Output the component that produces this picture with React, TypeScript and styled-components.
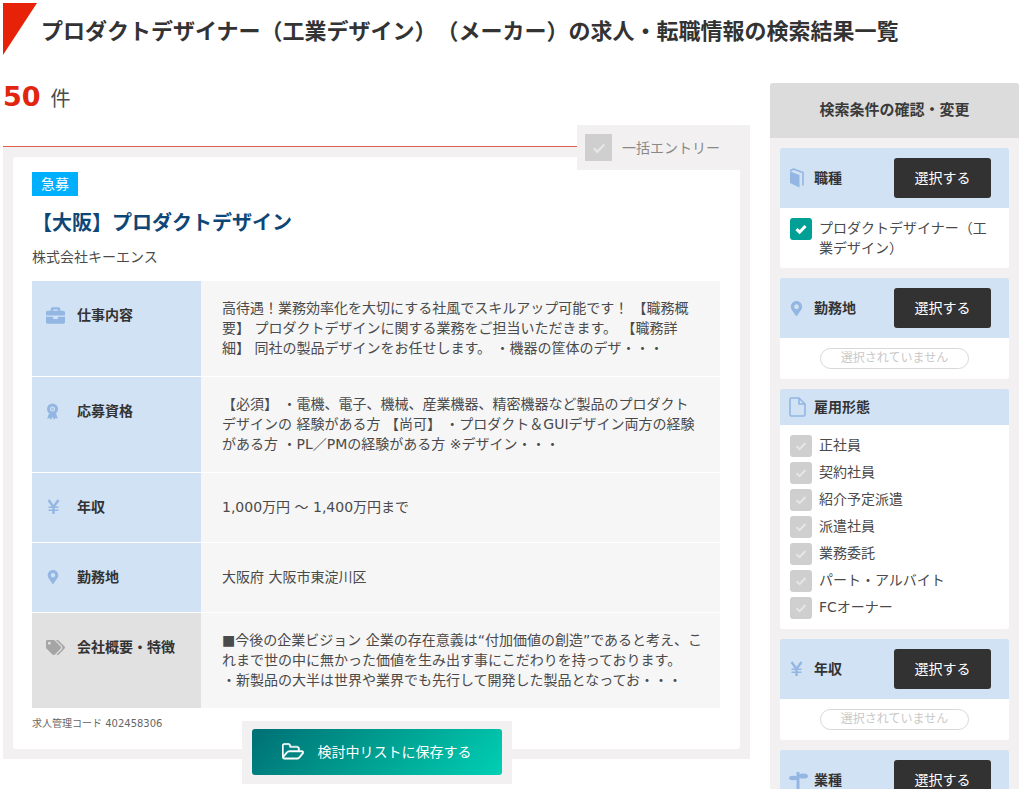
import React from "react";
import styled, { createGlobalStyle } from "styled-components";
import { FaBriefcase, FaMapMarkerAlt, FaTags } from "react-icons/fa";

const GlobalStyle = createGlobalStyle`
  *, *::before, *::after { box-sizing: border-box; }
  html { scrollbar-width: none; }
  body {
    margin: 0;
    background: #fff;
    color: #4a4a4a;
    font-family: "DejaVu Sans", "Noto Sans CJK JP", sans-serif;
    font-size: 14px;
    line-height: 20px;
    text-spacing-trim: space-all;
  }
  button, input { font: inherit; }
  h1, h2, h3, p, ul { margin: 0; padding: 0; }
`;

const Page = styled.div`
  padding: 3px 5px 10px 3px;
`;

const PageHeader = styled.header`
  display: flex;
  align-items: flex-start;
  gap: 4px;
  height: 80px;
`;

const Corner = styled.div`
  flex: none;
  width: 34px;
  height: 52px;
  background: #e62208;
  clip-path: polygon(0 0, 100% 0, 0 100%);
`;

const PageTitle = styled.h1`
  padding-top: 13px;
  color: #333;
  font-size: 22px;
  line-height: 32px;
`;

const Columns = styled.div`
  display: grid;
  grid-template-columns: minmax(0, 1fr) 249px;
  gap: 20px;
  align-items: start;
`;

const Count = styled.p`
  display: flex;
  align-items: baseline;
  gap: 10px;
  height: 63px;
  font-size: 20px;
  line-height: 28px;
`;

const CountNumber = styled.strong`
  color: #e2250f;
  font-size: 27px;
`;

const JobFrame = styled.article`
  position: relative;
  padding: 10px;
  border-top: 1px solid #e0604f;
  background: #f2f0f0;
`;

const JobCard = styled.div`
  padding: 15px 20px 15px 19px;
  border-radius: 3px;
  background: #fff;
`;

const BulkEntry = styled.label`
  position: absolute;
  top: -22px;
  right: 0;
  display: flex;
  align-items: center;
  gap: 10px;
  width: 173px;
  height: 45px;
  padding: 0 8px;
  background: #f2f0f0;
  color: #888;
`;

const Badge = styled.span`
  display: inline-block;
  padding: 2px 9px;
  background: #00b0ff;
  color: #fff;
`;

const JobTitle = styled.h2`
  margin-top: 11px;
  color: #0e4676;
  font-size: 20px;
  line-height: 32px;
`;

const Company = styled.p`
  margin: 8px 0 14px;
`;

const Details = styled.table`
  width: 100%;
  border-spacing: 0;
`;

const DetailLabel = styled.th<{ $muted?: boolean }>`
  width: 169px;
  padding: 24px 0 0 14px;
  border-bottom: 1px solid #fff;
  background: ${(p) => (p.$muted ? "#e1e1e1" : "#d1e2f4")};
  color: #333;
  text-align: left;
  vertical-align: top;
`;

const LabelContent = styled.div<{ $muted?: boolean }>`
  display: grid;
  grid-template-columns: 20px 1fr;
  gap: 11px;
  align-items: center;

  svg { color: ${(p) => (p.$muted ? "#a5a5a5" : "#93b6e2")}; }
`;

const DetailText = styled.td<{ $tall?: boolean }>`
  height: ${(p) => (p.$tall ? 96 : 70)}px;
  padding: 16px 16px 18px 21px;
  border-bottom: 1px solid #fff;
  background: #f6f6f6;
  white-space: pre-line;
`;

const JobCode = styled.p`
  margin-top: 5px;
  color: #666;
  font-size: 10px;
`;

const SaveArea = styled.div`
  position: absolute;
  bottom: -25px;
  left: 50%;
  width: 270px;
  padding: 8px 10px 9px;
  background: #f2f0f0;
  transform: translateX(-50%);
`;

const SaveButton = styled.button`
  display: flex;
  align-items: center;
  justify-content: center;
  gap: 14px;
  width: 100%;
  height: 46px;
  padding: 0;
  border: 0;
  border-radius: 3px;
  background: linear-gradient(135deg, #006f75, #009b8e 45%, #00cfb4);
  color: #fff;
`;

const Sidebar = styled.aside`
  border-radius: 3px;
  overflow: hidden;
  background: #f2f0f0;
`;

const SidebarTitle = styled.h2`
  padding: 17px 0 18px;
  background: #dcdcdc;
  color: #3a3a3a;
  font-size: 15px;
  line-height: 20px;
  text-align: center;
`;

const Groups = styled.div`
  display: grid;
  gap: 10px;
  padding: 10px;
`;

const Group = styled.section`
  background: #fff;
  border-radius: 2px;
  overflow: hidden;
`;

const GroupHeader = styled.div<{ $compact?: boolean }>`
  display: grid;
  grid-template-columns: 20px 1fr auto;
  column-gap: 5px;
  align-items: center;
  height: ${(p) => (p.$compact ? 36 : 60)}px;
  padding: 0 18px 0 9px;
  background: #d1e2f4;

  svg { color: #93b6e2; }
`;

const GroupTitle = styled.h3`
  color: #333;
  font-size: 14px;
`;

const SelectButton = styled.button`
  width: 97px;
  height: 40px;
  padding: 0;
  border: 0;
  border-radius: 3px;
  background: #323232;
  color: #fff;
`;

const Options = styled.ul`
  display: grid;
  gap: 5px;
  padding: 10px;
  list-style: none;
`;

const Option = styled.label`
  display: grid;
  grid-template-columns: 22px 1fr;
  gap: 7px;
  align-items: start;
`;

const Empty = styled.div`
  padding: 10px 40px;
`;

const EmptyPill = styled.p`
  border: 1px solid #d8d8d8;
  border-radius: 11px;
  color: #c8c8c8;
  font-size: 12px;
  line-height: 19px;
  text-align: center;
`;

const CheckBox = styled.span<{ $size: number }>`
  display: grid;
  flex: none;
  place-items: center;
  width: ${(p) => p.$size}px;
  height: ${(p) => p.$size}px;

  > * { grid-area: 1 / 1; }
  svg { position: relative; pointer-events: none; color: #e6e6e6; }
  input:checked + svg { color: #fff; }
`;

const CheckInput = styled.input<{ $square?: boolean }>`
  width: 100%;
  height: 100%;
  margin: 0;
  appearance: none;
  border-radius: ${(p) => (p.$square ? 0 : 3)}px;
  background: #cfcfcf;

  &:checked { background: #00a096; }
`;

function Check({ size = 22, square, checked }: { size?: number; square?: boolean; checked?: boolean }) {
  const glyph = size > 22 ? 14 : 12;
  return (
    <CheckBox $size={size}>
      <CheckInput type="checkbox" defaultChecked={checked} $square={square} />
      <svg width={glyph} height={glyph} viewBox="0 0 12 12" fill="none" stroke="currentColor" strokeWidth={checked ? 3 : 2}>
        <path d="M1.5 6.2 4.6 9.2 10.5 3" />
      </svg>
    </CheckBox>
  );
}

const BookIcon = () => (
  <svg width="17" height="20" viewBox="0 0 17 20" fill="currentColor">
    <path d="M1 3.500 10.500 7v12.500L1 15z" />
    <path d="M1 3 4.500 1l9.500 3.500V17.500" fill="none" stroke="currentColor" strokeWidth="1.600" strokeLinejoin="round" />
  </svg>
);

const SignIcon = () => (
  <svg width="19" height="20" viewBox="0 0 19 20" fill="currentColor">
    <path d="M7.500 2h3v18h-3z" />
    <ellipse cx="14" cy="6" rx="5" ry="2.600" />
    <ellipse cx="4.500" cy="8" rx="4.500" ry="2.200" />
  </svg>
);

const YenIcon = () => (
  <svg width="15" height="16" viewBox="0 0 15 16" fill="none" stroke="currentColor">
    <path d="M2.500 1 7.500 8 12.500 1M7.500 7.500V15" strokeWidth="2.400" />
    <path d="M2.500 8.300h10M2.500 11.300h10" strokeWidth="1.500" />
  </svg>
);

const RibbonIcon = () => (
  <svg width="13" height="17" viewBox="0 0 13 17" fill="currentColor">
    <path d="M3 10.500 1.200 15.500l2.500-.3 1.500 1.500 1.300-3 1.300 3 1.500-1.500 2.500.3L10 10.500z" />
    <circle cx="6.500" cy="6" r="4" fill="none" stroke="currentColor" strokeWidth="3" />
    <circle cx="6.500" cy="6" r="1.500" opacity=".7" />
  </svg>
);

const FileIcon = () => (
  <svg width="17" height="20" viewBox="0 0 17 20" fill="none" stroke="currentColor" strokeWidth="1.600" strokeLinejoin="round">
    <path d="M1 2.500Q1 1 2.500 1H10l6 6v10.500Q16 19 14.500 19h-12Q1 19 1 17.500zM10 1v6h6" />
  </svg>
);

const FolderIcon = () => (
  <svg width="22" height="18" viewBox="0 0 1920 1536" fill="currentColor" stroke="currentColor" strokeWidth="40">
    <path d="M1781 803q0-35-53-35H640q-40 0-85.500 21.500T483 842l-294 363q-18 24-18 40 0 35 53 35h1088q40 0 86-22t71-53l294-363q18-22 18-39zM640 640h768V480q0-40-28-68t-68-28H736q-40 0-68-28t-28-68v-64q0-40-28-68t-68-28H224q-40 0-68 28t-28 68v853l256-315q44-53 116-87.500T640 640zm1269 163q0 62-46 120l-295 363q-43 53-116 87.500t-140 34.500H224q-92 0-158-66T0 1184V224q0-92 66-158T224 0h320q92 0 158 66t66 158v32h544q92 0 158 66t66 158v160h192q54 0 99 24.500t67 70.500q15 32 15 68z" />
  </svg>
);

const details = [
  {
    label: "仕事内容",
    icon: <FaBriefcase size={19} />,
    tall: true,
    text: "高待遇！業務効率化を大切にする社風でスキルアップ可能です！ 【職務概\n要】 プロダクトデザインに関する業務をご担当いただきます。 【職務詳\n細】 同社の製品デザインをお任せします。 ・機器の筐体のデザ・・・",
  },
  {
    label: "応募資格",
    icon: <RibbonIcon />,
    tall: true,
    text: "【必須】 ・電機、電子、機械、産業機器、精密機器など製品のプロダクト\nデザインの 経験がある方 【尚可】 ・プロダクト＆GUIデザイン両方の経験\nがある方 ・PL／PMの経験がある方 ※デザイン・・・",
  },
  { label: "年収", icon: <YenIcon />, text: "1,000万円 ～ 1,400万円まで" },
  { label: "勤務地", icon: <FaMapMarkerAlt size={14} />, text: "大阪府 大阪市東淀川区" },
  {
    label: "会社概要・特徴",
    icon: <FaTags size={19} />,
    tall: true,
    muted: true,
    text: "■今後の企業ビジョン 企業の存在意義は“付加価値の創造”であると考え、こ\nれまで世の中に無かった価値を生み出す事にこだわりを持っております。\n・新製品の大半は世界や業界でも先行して開発した製品となってお・・・",
  },
];

const employment = ["正社員", "契約社員", "紹介予定派遣", "派遣社員", "業務委託", "パート・アルバイト", "FCオーナー"];

function FilterGroup(props: {
  icon: React.ReactNode;
  title: string;
  options?: string[];
  checked?: boolean;
  compact?: boolean;
}) {
  return (
    <Group>
      <GroupHeader $compact={props.compact}>
        {props.icon}
        <GroupTitle>{props.title}</GroupTitle>
        {!props.compact && <SelectButton type="button">選択する</SelectButton>}
      </GroupHeader>
      {props.options ? (
        <Options>
          {props.options.map((name) => (
            <li key={name}>
              <Option>
                <Check checked={props.checked} />
                <span>{name}</span>
              </Option>
            </li>
          ))}
        </Options>
      ) : (
        <Empty>
          <EmptyPill>選択されていません</EmptyPill>
        </Empty>
      )}
    </Group>
  );
}

export default function App() {
  return (
    <Page>
      <GlobalStyle />
      <PageHeader>
        <Corner />
        <PageTitle>プロダクトデザイナー（工業デザイン）（メーカー）の求人・転職情報の検索結果一覧</PageTitle>
      </PageHeader>
      <Columns>
        <main>
          <Count>
            <CountNumber>50</CountNumber>件
          </Count>
          <JobFrame>
            <BulkEntry>
              <Check size={27} square />
              一括エントリー
            </BulkEntry>
            <JobCard>
              <Badge>急募</Badge>
              <JobTitle>【大阪】プロダクトデザイン</JobTitle>
              <Company>株式会社キーエンス</Company>
              <Details>
                <tbody>
                  {details.map((d) => (
                    <tr key={d.label}>
                      <DetailLabel scope="row" $muted={d.muted}>
                        <LabelContent $muted={d.muted}>
                          {d.icon}
                          {d.label}
                        </LabelContent>
                      </DetailLabel>
                      <DetailText $tall={d.tall}>{d.text}</DetailText>
                    </tr>
                  ))}
                </tbody>
              </Details>
              <JobCode>求人管理コード 402458306</JobCode>
            </JobCard>
            <SaveArea>
              <SaveButton type="button">
                <FolderIcon />
                検討中リストに保存する
              </SaveButton>
            </SaveArea>
          </JobFrame>
        </main>
        <Sidebar>
          <SidebarTitle>検索条件の確認・変更</SidebarTitle>
          <Groups>
            <FilterGroup icon={<BookIcon />} title="職種" options={["プロダクトデザイナー（工業デザイン）"]} checked />
            <FilterGroup icon={<FaMapMarkerAlt size={15} />} title="勤務地" />
            <FilterGroup icon={<FileIcon />} title="雇用形態" options={employment} compact />
            <FilterGroup icon={<YenIcon />} title="年収" />
            <FilterGroup icon={<SignIcon />} title="業種" />
          </Groups>
        </Sidebar>
      </Columns>
    </Page>
  );
}
